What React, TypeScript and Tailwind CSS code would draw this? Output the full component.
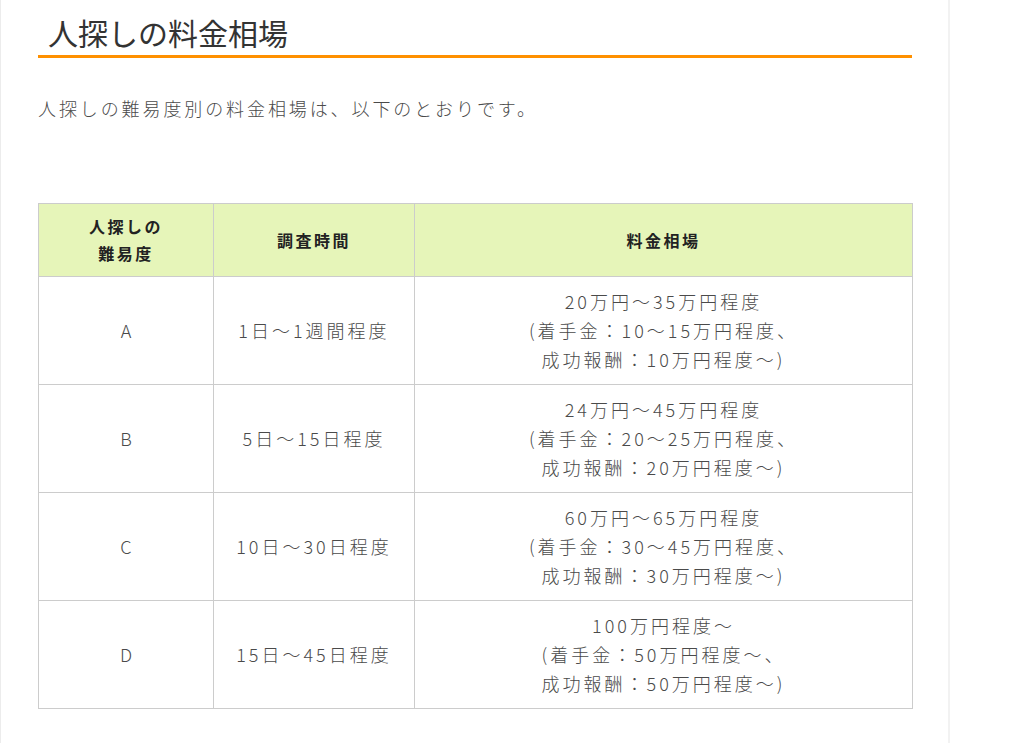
import React from "react";

const rows = [
  { lv: "A", time: "1日〜1週間程度", price: ["20万円〜35万円程度", "(着手金：10〜15万円程度、", "成功報酬：10万円程度〜)"] },
  { lv: "B", time: "5日〜15日程度", price: ["24万円〜45万円程度", "(着手金：20〜25万円程度、", "成功報酬：20万円程度〜)"] },
  { lv: "C", time: "10日〜30日程度", price: ["60万円〜65万円程度", "(着手金：30〜45万円程度、", "成功報酬：30万円程度〜)"] },
  { lv: "D", time: "15日〜45日程度", price: ["100万円程度〜", "(着手金：50万円程度〜、", "成功報酬：50万円程度〜)"] },
];

export default function App() {
  return (
    <div
      className="flex w-[1018px] h-[743px] bg-white overflow-hidden"
      style={{ fontFamily: '"Noto Sans CJK JP", "Noto Sans", sans-serif' }}
    >
      <div className="w-[950px] shrink-0 border-l border-l-[#ececec] border-r-2 border-r-[#f2f2f2] pl-[37px] pr-[36px]">
        <div className="pt-[10px]">
          <h2 className="pl-[10px] text-[30px] leading-[44px] font-normal text-[#333]">人探しの料金相場</h2>
          <div className="h-[3px] bg-[#ff9000] mt-[1px]" />
        </div>
        <p className="mt-[36px] text-[18px] leading-[28px] font-light text-[#4a4a4a] tracking-[2.9px]">
          人探しの難易度別の料金相場は、以下のとおりです。
        </p>
        <table className="mt-[81px] w-[875px] border-collapse">
          <thead>
            <tr className="bg-[#e6f5b9] h-[73px]">
              <th className="w-[175px] border border-[#cccccc] text-[16px] leading-[27px] font-bold text-[#222] tracking-[2.5px]">
                人探しの<br />難易度
              </th>
              <th className="w-[201px] border border-[#cccccc] text-[16px] leading-[27px] font-bold text-[#222] tracking-[2.5px]">
                調査時間
              </th>
              <th className="border border-[#cccccc] text-[16px] leading-[27px] font-bold text-[#222] tracking-[2.5px]">
                料金相場
              </th>
            </tr>
          </thead>
          <tbody>
            {rows.map((r) => (
              <tr key={r.lv} className="h-[108px]">
                <td className="border border-[#cccccc] text-center text-[18px] font-light text-[#4a4a4a]">{r.lv}</td>
                <td className="border border-[#cccccc] text-center text-[18px] font-light text-[#4a4a4a] tracking-[3px]">{r.time}</td>
                <td className="border border-[#cccccc] text-center text-[18px] leading-[29px] font-light text-[#4a4a4a] tracking-[3px]">
                  {r.price.map((l, i) => (
                    <div key={i}>{l}</div>
                  ))}
                </td>
              </tr>
            ))}
          </tbody>
        </table>
      </div>
      <div className="flex-1 bg-white" />
    </div>
  );
}
